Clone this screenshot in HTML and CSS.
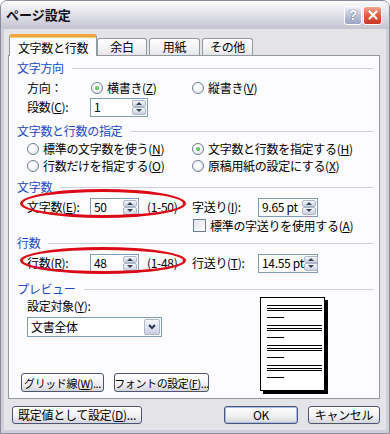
FILE: index.html
```html
<!DOCTYPE html>
<html lang="ja">
<head>
  <meta charset="UTF-8">
  <title>ページ設定</title>
  <link rel="stylesheet" href="styles.css">
</head>
<body>
<div class="window">
  <div class="titlebar">
    <span class="title">ページ設定</span>
    <div class="title-buttons">
      <span class="tb-btn help">?</span>
      <span class="tb-btn close">
        <svg width="12" height="12" viewBox="0 0 12 12"><path d="M2.5 2.5 L9.5 9.5 M9.5 2.5 L2.5 9.5" stroke="#fff" stroke-width="2.2" stroke-linecap="round"/></svg>
      </span>
    </div>
  </div>

  <div class="frame">
    <div class="tabs">
      <span class="tab active">文字数と行数</span>
      <span class="tab w50">余白</span>
      <span class="tab w51">用紙</span>
      <span class="tab w51">その他</span>
    </div>

    <div class="panel">
      <!-- 文字方向 -->
      <section class="group">
        <div class="group-head">文字方向</div>
        <div class="row row-dir">
          <span class="label">方向：</span>
          <span class="radio-item first"><span class="radio checked"></span>横書き(<u>Z</u>)</span>
          <span class="radio-item"><span class="radio"></span>縦書き(<u>V</u>)</span>
        </div>
        <div class="row row-field">
          <span class="label">段数(<u>C</u>):</span>
          <span class="spin-input w58"><span class="val">1</span><span class="spinner"><span class="spin-up"></span><span class="spin-down"></span></span></span>
        </div>
      </section>

      <!-- 文字数と行数の指定 -->
      <section class="group g2">
        <div class="group-head">文字数と行数の指定</div>
        <div class="radio-grid">
          <span class="radio-item"><span class="radio"></span>標準の文字数を使う(<u>N</u>)</span>
          <span class="radio-item"><span class="radio checked"></span>文字数と行数を指定する(<u>H</u>)</span>
          <span class="radio-item"><span class="radio"></span>行数だけを指定する(<u>O</u>)</span>
          <span class="radio-item"><span class="radio"></span>原稿用紙の設定にする(<u>X</u>)</span>
        </div>
      </section>

      <!-- 文字数 -->
      <section class="group g3">
        <div class="group-head">文字数</div>
        <div class="row row-field">
          <span class="ellipse e1"></span>
          <div class="left-part">
            <span class="label">文字数(<u>E</u>):</span>
            <span class="spin-input w49"><span class="val">50</span><span class="spinner"><span class="spin-up"></span><span class="spin-down"></span></span></span>
            <span class="range">(1-50)</span>
          </div>
          <span class="label2">字送り(<u>I</u>):</span>
          <span class="spin-input w60"><span class="val">9.65 pt</span><span class="spinner"><span class="spin-up"></span><span class="spin-down"></span></span></span>
        </div>
        <div class="row row-check">
          <span class="checkbox"></span>標準の字送りを使用する(<u>A</u>)
        </div>
      </section>

      <!-- 行数 -->
      <section class="group g4">
        <div class="group-head">行数</div>
        <div class="row row-field">
          <span class="ellipse e2"></span>
          <div class="left-part">
            <span class="label">行数(<u>R</u>):</span>
            <span class="spin-input w49"><span class="val">48</span><span class="spinner"><span class="spin-up"></span><span class="spin-down"></span></span></span>
            <span class="range">(1-48)</span>
          </div>
          <span class="label2">行送り(<u>T</u>):</span>
          <span class="spin-input w60"><span class="val">14.55 pt</span><span class="spinner"><span class="spin-up"></span><span class="spin-down"></span></span></span>
        </div>
      </section>

      <!-- プレビュー -->
      <section class="group g5">
        <div class="group-head">プレビュー</div>
        <div class="preview-body">
          <div class="preview-left">
            <div class="target-label">設定対象(<u>Y</u>):</div>
            <div class="select">
              <span class="val">文書全体</span>
              <span class="drop"><svg width="8" height="6" viewBox="0 0 8 6"><polyline points="1,1 4,4 7,1" fill="none" stroke="#2c3650" stroke-width="2"/></svg></span>
            </div>
            <div class="panel-buttons">
              <span class="btn btn-grid">グリッド線(<u>W</u>)...</span>
              <span class="btn btn-font">フォントの設定(<u>F</u>)...</span>
            </div>
          </div>
          <div class="page">
            <svg width="63" height="92" viewBox="0 0 63 92" shape-rendering="crispEdges">
              <g stroke="#000" stroke-width="1">
                <line x1="6" y1="7.5" x2="61" y2="7.5"/><line x1="6" y1="10.5" x2="61" y2="10.5"/><line x1="6" y1="12.5" x2="61" y2="12.5"/><line x1="6" y1="19.5" x2="23" y2="19.5"/>
                <line x1="6" y1="27.5" x2="61" y2="27.5"/><line x1="6" y1="30.5" x2="61" y2="30.5"/><line x1="6" y1="32.5" x2="61" y2="32.5"/><line x1="6" y1="39.5" x2="23" y2="39.5"/>
                <line x1="6" y1="47.5" x2="61" y2="47.5"/><line x1="6" y1="50.5" x2="61" y2="50.5"/><line x1="6" y1="52.5" x2="61" y2="52.5"/><line x1="6" y1="59.5" x2="23" y2="59.5"/>
                <line x1="6" y1="67.5" x2="61" y2="67.5"/><line x1="6" y1="70.5" x2="61" y2="70.5"/><line x1="6" y1="72.5" x2="61" y2="72.5"/><line x1="6" y1="79.5" x2="23" y2="79.5"/>
              </g>
            </svg>
          </div>
        </div>
      </section>
    </div>

    <div class="footer">
      <span class="btn btn-default">既定値として設定(<u>D</u>)...</span>
      <span class="spacer"></span>
      <span class="btn btn-ok">OK</span>
      <span class="btn btn-cancel">キャンセル</span>
    </div>
  </div>
</div>
</body>
</html>
```

FILE: styles.css
```css
body {
  margin: 0;
  font-family: "Noto Sans CJK JP", "Noto Sans", sans-serif;
  font-size: 12px;
  line-height: 14px;
  letter-spacing: -0.3px;
  color: #000;
  background: #fff;
}
u {
  text-underline-offset: 1px;
}
.window {
  width: 390px;
  height: 434px;
  box-sizing: border-box;
  display: flex;
  flex-direction: column;
  background: #e3e3e8;
  border: 1px solid #8a8a9a;
  border-radius: 7px 7px 0 0;
  overflow: hidden;
}
.titlebar {
  height: 28px;
  flex: none;
  display: flex;
  align-items: center;
  justify-content: space-between;
  padding: 0 7px 0 5px;
  background: linear-gradient(to bottom, #fdfdfe 0%, #ececf1 25%, #dadae3 60%, #c4c4d0 100%);
}
.title {
  font-size: 13px;
  font-weight: bold;
  letter-spacing: 0;
  color: #111118;
}
.title-buttons {
  display: flex;
  gap: 1px;
}
.tb-btn {
  width: 18px;
  height: 19px;
  box-sizing: border-box;
  border: 1px solid #fff;
  border-radius: 3px;
  display: flex;
  align-items: center;
  justify-content: center;
}
.help {
  background: linear-gradient(to bottom, #eef0f7, #bcc2d8 50%, #9aa3c2);
  color: #fff;
  font-family: "Liberation Sans", sans-serif;
  font-weight: bold;
  font-size: 14px;
  text-shadow: 0 0 1px #4c5678, 0 0 1px #4c5678;
}
.close {
  width: 19px;
  background: linear-gradient(to bottom, #f3a88f, #e05a3c 50%, #c73a20);
}

.frame {
  flex: 1;
  display: flex;
  flex-direction: column;
  padding-top: 5px;
  border: 3px solid #d0d0da;
  border-top: 0;
}

/* tabs */
.tabs {
  display: flex;
  align-items: flex-end;
  height: 21px;
  padding-left: 5px;
  position: relative;
  z-index: 1;
}
.tab {
  height: 17px;
  box-sizing: border-box;
  border: 1px solid #919b9c;
  border-bottom: 0;
  border-radius: 3px 3px 0 0;
  background: linear-gradient(to bottom, #fefefe, #f2f2f5 60%, #e4e4ea);
  text-align: center;
  padding-top: 1px;
  margin-right: 2px;
}
.tab.active {
  width: 88px;
  height: 22px;
  margin-right: 0;
  margin-bottom: -1px;
  padding-top: 4px;
  background: #fcfcfe;
  border-top: 3px solid #f2a43a;
  box-shadow: inset 0 1px 0 #ffd27a;
}
.tab.w50 { width: 50px; }
.tab.w51 { width: 51px; }

/* panel */
.panel {
  margin-left: 4px;
  width: 372px;
  box-sizing: border-box;
  border: 1px solid #919b9c;
  background: #fcfcfe;
  padding: 5px 5px 6px 8px;
}
.group-head {
  display: flex;
  align-items: center;
  height: 14px;
  color: #2148c6;
}
.group-head::after {
  content: "";
  flex: 1;
  height: 1px;
  margin-left: 8px;
  background: #cfd0d8;
}
.g2 { margin-top: 7px; }
.g3 { margin-top: 6px; }
.g4 { margin-top: 2px; }
.g5 { margin-top: 9px; }

.row {
  display: flex;
  align-items: center;
  padding-left: 10px;
  position: relative;
}
.row-dir {
  height: 18px;
  margin-top: 4px;
}
.row-field {
  height: 20px;
}
.g3 .row-field,
.g4 .row-field {
  margin-top: 3px;
}
.label {
  width: 63px;
  flex: none;
}
.radio-item {
  display: flex;
  align-items: center;
  white-space: nowrap;
}
.row-dir .label { width: 64px; }
.radio-item.first { width: 101px; }

.radio {
  width: 12px;
  height: 12px;
  flex: none;
  box-sizing: border-box;
  border: 1px solid #6d7d94;
  border-radius: 50%;
  background: radial-gradient(circle at 40% 35%, #ffffff 30%, #d8dbe4);
  margin-right: 4px;
  position: relative;
}
.radio.checked::after {
  content: "";
  position: absolute;
  left: 3px;
  top: 3px;
  width: 4px;
  height: 4px;
  border-radius: 50%;
  background: radial-gradient(circle at 40% 40%, #7ee07e, #1f9a1f);
}

.radio-grid {
  display: grid;
  grid-template-columns: 165px 1fr;
  grid-auto-rows: 17px;
  align-items: center;
  margin-top: 2px;
  padding-left: 10px;
}

/* spin inputs */
.spin-input {
  display: flex;
  align-items: center;
  height: 19px;
  flex: none;
  box-sizing: border-box;
  border: 1px solid #7f9db9;
  background: #fff;
  padding-left: 3px;
}
.spin-input .val {
  flex: 1;
  white-space: nowrap;
}
.w58 { width: 58px; }
.w49 { width: 49px; }
.w60 { width: 60px; }
.spinner {
  width: 14px;
  height: 15px;
  flex: none;
  display: flex;
  flex-direction: column;
  margin-right: 1px;
}
.spinner span {
  flex: 1;
  display: flex;
  align-items: center;
  justify-content: center;
  border: 1px solid #aeb6cc;
  border-radius: 2px;
  background: linear-gradient(to bottom, #f6f7fb, #cbd1e0);
}
.spin-up::after {
  content: "";
  border-left: 3px solid transparent;
  border-right: 3px solid transparent;
  border-bottom: 3px solid #3a4258;
}
.spin-down::after {
  content: "";
  border-left: 3px solid transparent;
  border-right: 3px solid transparent;
  border-top: 3px solid #3a4258;
}

.left-part {
  width: 165px;
  flex: none;
  display: flex;
  align-items: center;
}
.range {
  margin-left: 8px;
}
.label2 {
  width: 66px;
  flex: none;
}
.row-check {
  height: 17px;
  padding-left: 176px;
}
.checkbox {
  width: 13px;
  height: 13px;
  box-sizing: border-box;
  border: 1px solid #6d7d94;
  background: linear-gradient(135deg, #e0e2ea, #ffffff);
  margin-right: 4px;
  flex: none;
}

/* red annotation ellipses */
.ellipse {
  position: absolute;
  left: 3px;
  width: 166px;
  box-sizing: border-box;
  border: 3px solid #dc0a16;
  border-radius: 50%;
}
.e1 { top: -8px; height: 29px; }
.e2 { top: -6px; height: 27px; }

/* preview */
.preview-body {
  display: flex;
}
.preview-left {
  width: 243px;
  flex: none;
}
.target-label {
  height: 14px;
  margin-top: 3px;
  padding-left: 10px;
}
.select {
  width: 135px;
  height: 20px;
  box-sizing: border-box;
  margin: 4px 0 0 10px;
  border: 1px solid #7f9db9;
  background: #fff;
  display: flex;
  align-items: center;
  padding-left: 3px;
}
.select .val {
  flex: 1;
}
.drop {
  width: 16px;
  height: 16px;
  margin-right: 1px;
  box-sizing: border-box;
  border: 1px solid #aeb6cc;
  border-radius: 2px;
  background: linear-gradient(to bottom, #f6f7fb, #c8cfdf);
  display: flex;
  align-items: center;
  justify-content: center;
}
.panel-buttons {
  display: flex;
  gap: 10px;
  margin: 36px 0 0 4px;
}
.page {
  width: 65px;
  height: 94px;
  box-sizing: border-box;
  margin-top: 1px;
  border: 1px solid #000;
  background: #fff;
  box-shadow: 3px 3px 0 #000;
}
.page svg {
  display: block;
}

/* buttons */
.btn {
  height: 19px;
  box-sizing: border-box;
  border: 1px solid #4d5573;
  border-radius: 3px;
  background: linear-gradient(to bottom, #ffffff, #f1f1f4 55%, #d5d5dd);
  display: flex;
  align-items: center;
  justify-content: center;
  white-space: nowrap;
}
.btn-grid,
.btn-font {
  font-size: 11px;
  letter-spacing: -0.4px;
}
.btn-grid { width: 83px; }
.btn-font { width: 95px; }

.footer {
  display: flex;
  align-items: center;
  padding: 7px 6px 0 8px;
}
.footer .btn {
  height: 18px;
}
.spacer {
  flex: 1;
}
.btn-default { width: 130px; }
.btn-ok {
  width: 74px;
  margin-right: 10px;
  box-shadow: inset 0 0 0 1px #a4bfee;
}
.btn-cancel { width: 72px; }
```
